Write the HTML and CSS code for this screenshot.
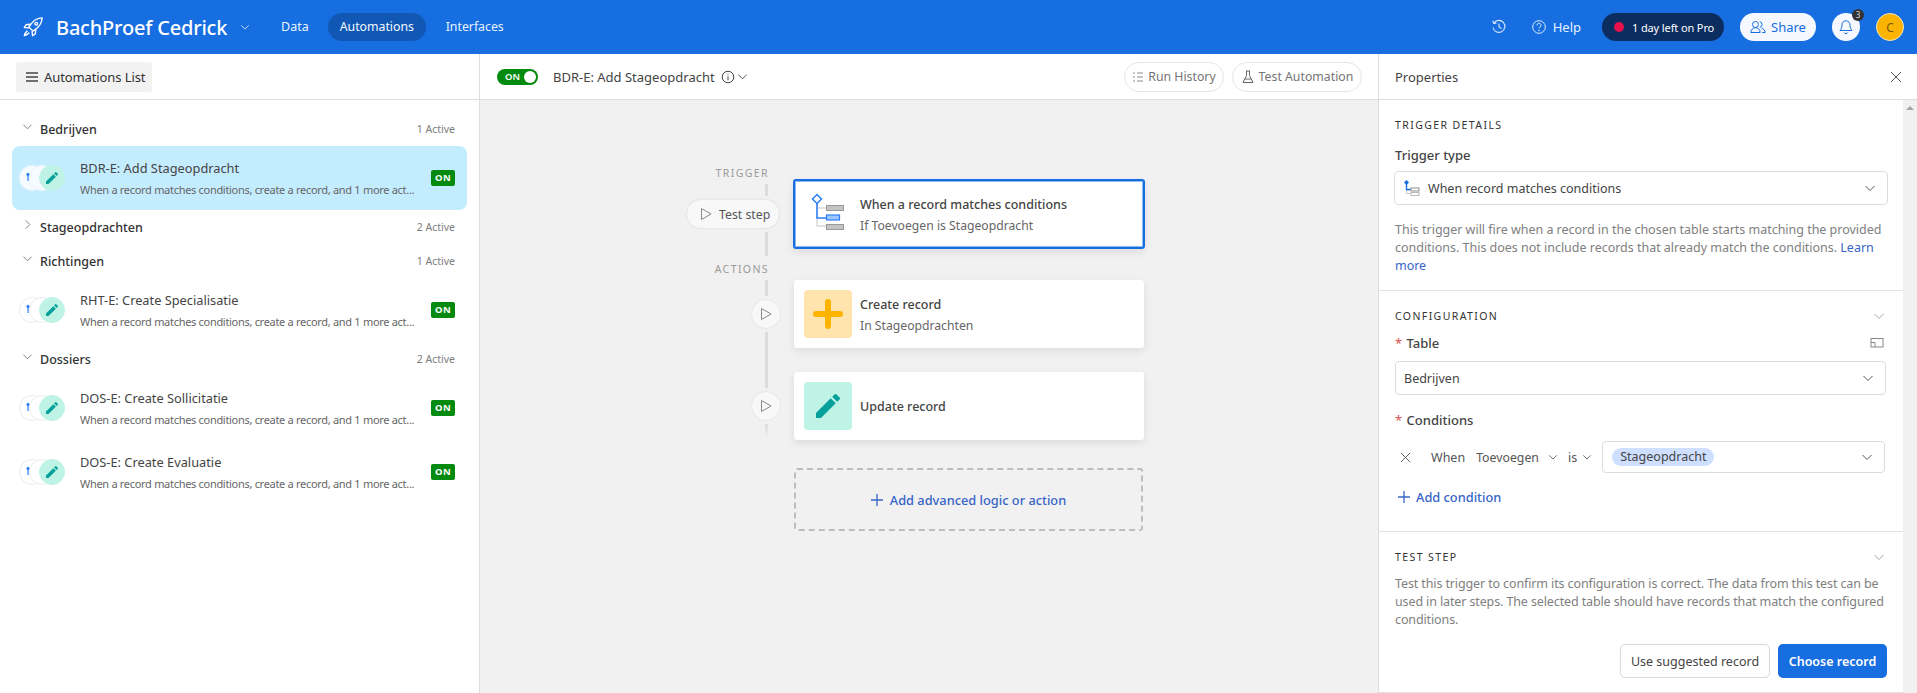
FILE: index.html
```html
<!DOCTYPE html>
<html lang="en">
<head>
<meta charset="utf-8">
<title>BachProef Cedrick - Automations</title>
<link rel="stylesheet" href="styles.css">
</head>
<body>
<svg class="defs" aria-hidden="true">
  <symbol id="chev" viewBox="0 0 12 12"><path d="M1.5 4l4.5 4.5L10.5 4" fill="none" stroke="currentColor" stroke-width="1"/></symbol>
  <symbol id="chevr" viewBox="0 0 12 12"><path d="M4 1.5L8.5 6 4 10.5" fill="none" stroke="currentColor" stroke-width="1"/></symbol>
  <symbol id="play" viewBox="0 0 14 14"><path d="M2.5 1.5L12 7l-9.5 5.500z" fill="none" stroke="currentColor" stroke-width="1"/></symbol>
  <symbol id="x" viewBox="0 0 12 12"><path d="M1 1l10 10M11 1L1 11" fill="none" stroke="currentColor" stroke-width="1"/></symbol>
  <symbol id="plus" viewBox="0 0 12 12"><path d="M6 0v12M0 6h12" fill="none" stroke="currentColor" stroke-width="1.300"/></symbol>
  <symbol id="pencil" viewBox="0 0 24 24"><path fill="currentColor" d="M3 17.250V21h3.750L17.810 9.940l-3.750-3.750L3 17.250zM20.710 7.040c.39-.39.39-1.020 0-1.410l-2.340-2.340c-.39-.39-1.020-.39-1.410 0l-1.830 1.830 3.750 3.750 1.830-1.830z"/></symbol>
  <symbol id="pin" viewBox="0 0 8 16"><path d="M4 5v6" stroke="#2d7ff9" stroke-width="1.200"/><path d="M4 2.500L6 4.500 4 6.500 2 4.500z" fill="#2d7ff9"/></symbol>
</svg>

<header class="topbar">
  <svg class="logo" viewBox="0 0 24 24" fill="none" stroke="#fff" stroke-width="1.500" stroke-linejoin="round" stroke-linecap="round">
    <path d="M22 2c-5 .3-9 2.500-12 6.500L7.500 12l4.500 4.500 3.500-2.500C19.500 11 21.700 7 22 2z"/>
    <path d="M8.500 9L4.500 9.500 2.500 12.500 7 13"/>
    <path d="M15 15.500l-.5 4-3 2-.5-4.500"/>
    <path d="M5.500 16.500C3.800 18 3 20 2.500 21.500 4 21 6 20.200 7.500 18.500"/>
    <circle cx="15.500" cy="8.500" r="1.500"/>
  </svg>
  <span class="base-name">BachProef Cedrick</span>
  <svg class="ic chev-base"><use href="#chev"/></svg>
  <nav class="nav">
    <a class="nav-item">Data</a>
    <a class="nav-item nav-active">Automations</a>
    <a class="nav-item">Interfaces</a>
  </nav>
  <div class="top-right">
    <svg class="ic-16" viewBox="0 0 16 16" fill="none" stroke="#dbe9fb" stroke-width="1.100"><path d="M2.800 4.200A6 6 0 1 1 2 8.500"/><path d="M1.800 1.800l1 2.600 2.600-.3"/><path d="M8 4.500V8l2.500 1.500"/></svg>
    <div class="help">
      <svg class="ic-16" viewBox="0 0 16 16" fill="none" stroke="#dbe9fb" stroke-width="1"><circle cx="8" cy="8" r="6.300"/><path d="M6 6.300a2 2 0 1 1 3 1.700c-.7.4-1 .8-1 1.500"/><circle cx="8" cy="11.500" r=".4"/></svg>
      <span>Help</span>
    </div>
    <div class="pro"><i class="dot"></i><span>1 day left on Pro</span></div>
    <div class="share">
      <svg class="ic-16" viewBox="0 0 16 16" fill="none" stroke="#166ee1" stroke-width="1"><circle cx="5.500" cy="5.500" r="3"/><path d="M.8 13.500c.3-3 2-4.800 4.700-4.800s4.400 1.800 4.700 4.800z"/><path d="M9.800 2.600a3 3 0 0 1 0 5.800M11.500 9c2 .5 3.300 2.200 3.700 4.500h-3"/></svg>
      <span>Share</span>
    </div>
    <div class="bell">
      <svg class="ic-16" viewBox="0 0 16 16" fill="none" stroke="#166ee1" stroke-width="1"><path d="M8 1.800c-2.600 0-4 2-4 4.400 0 3-1.500 4.500-2 5.300h12c-.5-.8-2-2.300-2-5.300 0-2.400-1.400-4.400-4-4.400z"/><path d="M6.300 13.500a1.800 1.800 0 0 0 3.400 0"/></svg>
      <b class="badge">3</b>
    </div>
    <div class="avatar">C</div>
  </div>
</header>

<main class="main">
  <aside class="side">
    <div class="bar side-bar">
      <button class="list-btn">
        <svg class="ic-12" viewBox="0 0 12 12" stroke="#444" stroke-width="1.300"><path d="M0 2h12M0 6h12M0 10h12"/></svg>
        <span>Automations List</span>
      </button>
    </div>
    <div class="groups">
      <div class="group-h"><svg class="ic g-chev"><use href="#chev"/></svg><span class="g-name">Bedrijven</span><span class="g-count">1 Active</span></div>
      <div class="row row-sel">
        <div class="stack"><i class="c c1"><svg><use href="#pin"/></svg></i><i class="c c2"></i><i class="c c3"><svg><use href="#pencil"/></svg></i></div>
        <div class="row-t"><div class="row-title">BDR-E: Add Stageopdracht</div><div class="row-sub">When a record matches conditions, create a record, and 1 more act...</div></div>
        <span class="on">ON</span>
      </div>
      <div class="group-h"><svg class="ic g-chev g-chev-r"><use href="#chevr"/></svg><span class="g-name">Stageopdrachten</span><span class="g-count">2 Active</span></div>
      <div class="group-h"><svg class="ic g-chev"><use href="#chev"/></svg><span class="g-name">Richtingen</span><span class="g-count">1 Active</span></div>
      <div class="row">
        <div class="stack"><i class="c c1"><svg><use href="#pin"/></svg></i><i class="c c2"></i><i class="c c3"><svg><use href="#pencil"/></svg></i></div>
        <div class="row-t"><div class="row-title">RHT-E: Create Specialisatie</div><div class="row-sub">When a record matches conditions, create a record, and 1 more act...</div></div>
        <span class="on">ON</span>
      </div>
      <div class="group-h"><svg class="ic g-chev"><use href="#chev"/></svg><span class="g-name">Dossiers</span><span class="g-count">2 Active</span></div>
      <div class="row">
        <div class="stack"><i class="c c1"><svg><use href="#pin"/></svg></i><i class="c c2"></i><i class="c c3"><svg><use href="#pencil"/></svg></i></div>
        <div class="row-t"><div class="row-title">DOS-E: Create Sollicitatie</div><div class="row-sub">When a record matches conditions, create a record, and 1 more act...</div></div>
        <span class="on">ON</span>
      </div>
      <div class="row">
        <div class="stack"><i class="c c1"><svg><use href="#pin"/></svg></i><i class="c c2"></i><i class="c c3"><svg><use href="#pencil"/></svg></i></div>
        <div class="row-t"><div class="row-title">DOS-E: Create Evaluatie</div><div class="row-sub">When a record matches conditions, create a record, and 1 more act...</div></div>
        <span class="on">ON</span>
      </div>
    </div>
  </aside>

  <section class="center">
    <div class="bar center-bar">
      <div class="toggle"><span>ON</span><i></i></div>
      <span class="auto-name">BDR-E: Add Stageopdracht</span>
      <svg class="ic-14 info" viewBox="0 0 14 14" fill="none" stroke="#444" stroke-width="1"><circle cx="7" cy="7" r="5.800"/><path d="M7 6.200v4"/><path d="M7 3.800v1"/></svg>
      <svg class="ic chev-name"><use href="#chev"/></svg>
      <div class="bar-actions">
        <div class="ghost">
          <svg class="ic-12" viewBox="0 0 12 12" stroke="#8a8a8a" stroke-width="1" fill="none"><path d="M1 2h2M5 2h6M1 6h2M5 6h6M1 10h2M5 10h6"/></svg>
          <span>Run History</span>
        </div>
        <div class="ghost">
          <svg class="ic-14" viewBox="0 0 14 14" stroke="#666" stroke-width="1" fill="none"><path d="M5 1h4M5.500 1v4.500L2 12.500h10L8.500 5.500V1"/><path d="M3.800 9h6.400"/></svg>
          <span>Test Automation</span>
        </div>
      </div>
    </div>
    <div class="canvas">
      <div class="flow">
        <div class="rail">
          <div class="rail-label">TRIGGER</div>
          <i class="line l12"></i>
          <div class="test-pill"><svg class="ic-14"><use href="#play"/></svg><span>Test step</span></div>
          <i class="line l24"></i>
          <div class="rail-label rail-actions">ACTIONS</div>
          <i class="line l16"></i>
          <div class="play-c"><svg class="ic-14"><use href="#play"/></svg></div>
          <i class="line l56"></i>
          <div class="play-c"><svg class="ic-14"><use href="#play"/></svg></div>
          <i class="line l-fade"></i>
        </div>
        <div class="cards">
          <div class="card card-trigger">
            <svg class="tile-svg" viewBox="0 0 48 48" fill="none">
              <path d="M13 14v22h9M13 18h9" stroke="#d9d9d9" stroke-width="1.500"/>
              <path d="M13 13v15h9" stroke="#2d7ff9" stroke-width="1.500"/>
              <path d="M13 4.500L17.500 9 13 13.500 8.500 9z" fill="#fff" stroke="#2d7ff9" stroke-width="1.500"/>
              <rect x="22.500" y="15.500" width="17" height="5" fill="#c4c4c4" stroke="#999" stroke-width="1"/>
              <rect x="22.500" y="25" width="13" height="5" fill="#9cc7ff" stroke="#2d7ff9" stroke-width="1.200"/>
              <rect x="22.500" y="34.500" width="17" height="5" fill="#c4c4c4" stroke="#999" stroke-width="1"/>
            </svg>
            <div class="card-text"><div class="card-title">When a record matches conditions</div><div class="card-sub">If Toevoegen is Stageopdracht</div></div>
          </div>
          <div class="card">
            <div class="tile tile-y"><svg viewBox="0 0 30 30"><path d="M15 3v24M3 15h24" stroke="#fcb400" stroke-width="6" stroke-linecap="round"/></svg></div>
            <div class="card-text"><div class="card-title">Create record</div><div class="card-sub">In Stageopdrachten</div></div>
          </div>
          <div class="card">
            <div class="tile tile-g"><svg><use href="#pencil"/></svg></div>
            <div class="card-title">Update record</div>
          </div>
          <div class="add-box"><svg class="ic-12"><use href="#plus"/></svg><span>Add advanced logic or action</span></div>
        </div>
      </div>
    </div>
  </section>

  <aside class="props">
    <div class="bar props-bar"><span class="props-title">Properties</span><svg class="ic-12 close"><use href="#x"/></svg></div>
    <div class="props-body">
      <div class="props-scroll">
        <section class="sec sec-1">
          <h3 class="sec-h">TRIGGER DETAILS</h3>
          <div class="lab lab-type">Trigger type</div>
          <div class="select">
            <svg class="sel-ic" viewBox="0 0 16 16" fill="none"><path d="M2.500 4v6h4M2.500 10v3.500h4" stroke="#c8c8c8"/><path d="M2.500 4v5.500h4" stroke="#166ee1" stroke-width="1.400"/><path d="M2.500 0L5 2.500 2.500 5 0 2.500z" fill="#166ee1"/><rect x="7" y="8" width="8" height="3" stroke="#777" stroke-width=".8"/><rect x="7" y="12.500" width="8" height="3" stroke="#aaa" stroke-width=".8"/></svg>
            <span class="sel-text">When record matches conditions</span>
            <svg class="ic sel-chev"><use href="#chev"/></svg>
          </div>
          <p class="help-p help-1">This trigger will fire when a record in the chosen table starts matching the provided conditions. This does not include records that already match the conditions. <a class="lnk">Learn more</a></p>
        </section>
        <section class="sec sec-2">
          <div class="sec-row"><h3 class="sec-h">CONFIGURATION</h3><svg class="ic sec-chev"><use href="#chev"/></svg></div>
          <div class="lab-row"><div class="lab"><em>*</em> Table</div>
            <svg class="ic-14" viewBox="0 0 14 14" fill="none" stroke="#888" stroke-width="1"><rect x="1" y="2.500" width="12" height="8.500"/><path d="M1 6.500h4V11"/></svg></div>
          <div class="select select-t"><span class="sel-text">Bedrijven</span><svg class="ic sel-chev"><use href="#chev"/></svg></div>
          <div class="lab lab-cond"><em>*</em> Conditions</div>
          <div class="cond">
            <svg class="ic-12 cond-x"><use href="#x"/></svg>
            <span class="cond-w">When</span>
            <span class="cond-f">Toevoegen</span><svg class="ic cond-c cond-c1"><use href="#chev"/></svg>
            <span class="cond-is">is</span><svg class="ic cond-c"><use href="#chev"/></svg>
            <div class="cond-box"><span class="chip">Stageopdracht</span><svg class="ic sel-chev"><use href="#chev"/></svg></div>
          </div>
          <div class="add-cond"><svg class="ic-12"><use href="#plus"/></svg><span>Add condition</span></div>
        </section>
        <section class="sec sec-3">
          <div class="sec-row"><h3 class="sec-h">TEST STEP</h3><svg class="ic sec-chev"><use href="#chev"/></svg></div>
          <p class="help-p help-2">Test this trigger to confirm its configuration is correct. The data from this test can be used in later steps. The selected table should have records that match the configured conditions.</p>
          <div class="btns"><button class="btn btn-o">Use suggested record</button><button class="btn btn-p">Choose record</button></div>
        </section>
      </div>
      <div class="scrollbar"><i class="arrow"></i></div>
    </div>
  </aside>
</main>
</body>
</html>
```

FILE: styles.css
```css
* { box-sizing: border-box; }
html, body { margin: 0; height: 100%; overflow: hidden; }
body { font-family: "Noto Sans", "Open Sans", sans-serif; font-size: 13px; color: #333; background: #fff; display: flex; flex-direction: column; }
svg { display: block; flex: none; }
i { display: block; }
.defs { display: none; }
.ic { width: 12px; height: 12px; }
.ic-12 { width: 12px; height: 12px; }
.ic-14 { width: 14px; height: 14px; }
.ic-16 { width: 16px; height: 16px; }

/* top bar */
.topbar { height: 54px; flex: none; background: #166ee1; display: flex; align-items: center; padding-left: 22px; color: #fff; }
.logo { width: 22px; height: 22px; }
.base-name { margin-left: 12px; font-size: 20px; font-weight: 500; letter-spacing: -.2px; width: 174px; white-space: nowrap; }
.chev-base { margin-left: 10px; color: #e3eefc; width: 10px; height: 10px; }
.nav { display: flex; align-items: center; margin-left: 31px; }
.nav-item { height: 28px; line-height: 27px; border-radius: 14px; padding: 0 12px; color: #e8f1fd; font-size: 12.300px; }
.nav-item + .nav-item { margin-left: 8px; }
.nav-item:first-child { padding: 0 0; margin-right: 11px; font-size: 12.500px; }
.nav-active { background: #1158b5; color: #f2f7fe; width: 98px; text-align: center; }
.top-right { margin-left: auto; display: flex; align-items: center; padding-right: 13px; }
.help { display: flex; align-items: center; gap: 6px; margin-left: 24px; color: #e8f1fd; font-size: 13px; }
.pro { margin-left: 21px; width: 122px; height: 28px; border-radius: 14px; background: #0c2d60; color: #fff; display: flex; align-items: center; padding-left: 12px; font-size: 11px; letter-spacing: -.12px; white-space: nowrap; }
.dot { width: 10px; height: 10px; border-radius: 50%; background: #e8114b; margin-right: 8px; }
.share { margin-left: 16px; width: 76px; height: 28px; border-radius: 14px; background: #f5f9ff; color: #166ee1; display: flex; align-items: center; justify-content: center; gap: 5px; font-size: 13px; }
.bell { margin-left: 16px; width: 28px; height: 28px; border-radius: 50%; background: #f5f9ff; display: flex; align-items: center; justify-content: center; position: relative; }
.badge { position: absolute; top: -4px; right: -4px; width: 12px; height: 12px; border-radius: 50%; background: #333; color: #ddd; font-size: 8px; font-weight: 400; line-height: 12px; text-align: center; }
.avatar { margin-left: 16px; width: 28px; height: 28px; border-radius: 50%; background: #fcb400; border: 1px solid #f7e6b8; color: #7a5a10; font-size: 12px; display: flex; align-items: center; justify-content: center; }

/* layout */
.main { flex: 1; min-height: 0; display: flex; }
.bar { height: 46px; flex: none; border-bottom: 1px solid #dedede; display: flex; align-items: center; background: #fff; }
.side { width: 480px; flex: none; border-right: 1px solid #dedede; display: flex; flex-direction: column; }
.center { width: 899px; flex: none; border-right: 1px solid #dedede; display: flex; flex-direction: column; }
.props { flex: 1; min-width: 0; display: flex; flex-direction: column; }

/* sidebar */
.side-bar { padding-left: 16px; }
.list-btn { width: 136px; height: 30px; border: 0; border-radius: 3px; background: #f2f2f2; color: #333; font: inherit; font-size: 13px; letter-spacing: -.1px; display: flex; align-items: center; gap: 6px; padding: 0 0 0 10px; white-space: nowrap; }
.groups { padding: 12px 0 0 12px; }
.group-h { width: 443px; height: 34px; display: flex; align-items: center; }
.g-chev { width: 11px; height: 11px; margin-left: 10px; color: #777; position: relative; top: -3px; }
.g-name { margin-left: 7px; font-size: 12.500px; font-weight: 500; color: #333; }
.g-count { margin-left: auto; font-size: 10.500px; color: #7d7d7d; }
.row { width: 455px; height: 64px; border-radius: 8px; display: flex; align-items: center; padding: 0 12px 0 7px; }
.row-sel { background: #c4ecff; }
.stack { width: 46px; height: 26px; flex: none; display: flex; position: relative; top: 0; }
.c { width: 26px; height: 26px; border-radius: 50%; background: rgba(255,255,255,.85); border: 1px solid #ececec; flex: none; display: flex; align-items: center; justify-content: center; }
.row-sel .c { background: #f5fbfe; border-color: #e9f5fb; }
.c2, .c3 { margin-left: -16px; }
.c1 { padding-right: 8px; }
.c1 svg { width: 8px; height: 16px; }
.c3, .row-sel .c3 { background: #bff3e5; border-color: #bff3e5; color: #06a09b; }
.c3 svg { width: 16px; height: 16px; }
.row-t { margin-left: 15px; width: 340px; min-width: 0; }
.row-title { font-size: 12.800px; line-height: 18px; color: #444; }
.row-sub { font-size: 11px; letter-spacing: -.3px; line-height: 16px; color: #666; margin-top: 5px; white-space: nowrap; overflow: hidden; }
.on { margin-left: auto; flex: none; width: 24px; height: 16px; border-radius: 2px; background: #048a0e; color: #fff; font-size: 9.500px; font-weight: 700; letter-spacing: .5px; line-height: 16px; text-align: center; }

/* center */
.center-bar { padding: 0 16px 0 17px; }
.toggle { width: 41px; height: 16px; border-radius: 8px; background: #048a0e; color: #fff; display: flex; align-items: center; padding: 0 2px 0 8px; justify-content: space-between; font-size: 9.500px; font-weight: 600; }
.toggle i { width: 12px; height: 12px; border-radius: 50%; background: #fff; }
.auto-name { margin-left: 15px; font-size: 13px; color: #444; }
.info { margin-left: 6px; }
.chev-name { margin-left: 2px; width: 11px; height: 11px; color: #444; }
.bar-actions { margin-left: auto; display: flex; gap: 8px; }
.ghost { height: 30px; border: 1px solid #e6e6e6; border-radius: 15px; display: flex; align-items: center; justify-content: center; gap: 4px; font-size: 12.300px; color: #757575; white-space: nowrap; }
.ghost:first-child { width: 100px; }
.ghost:last-child { width: 130px; }
.canvas { flex: 1; background: #f1f1f1; display: flex; padding: 65px 0 0 206px; }
.flow { display: flex; gap: 13px; }
.rail { width: 95px; display: flex; flex-direction: column; align-items: flex-end; }
.rail-label { height: 16px; line-height: 16px; margin-right: 12px; font-size: 10.500px; letter-spacing: 1.400px; color: #9a9a9a; }
.rail-actions { margin-top: 5px; }
.line { width: 3px; margin: 3px 13px 0 0; background: #dcdcdc; }
.l12 { height: 12px; }
.l24 { height: 24px; }
.l16 { height: 16px; }
.l56 { height: 56px; }
.l-fade { height: 14px; background: linear-gradient(#dcdcdc, #f1f1f1); }
.test-pill { margin: 3px 1px 0 0; width: 94px; height: 30px; border: 1px solid #e8e8e8; border-radius: 15px; background: #f8f8f8; display: flex; align-items: center; gap: 6px; padding-left: 12px; font-size: 12.300px; color: #555; white-space: nowrap; box-shadow: 0 0 2px rgba(0,0,0,.06); }
.test-pill svg, .play-c svg { color: #888; }
.play-c { margin-top: 3px; width: 30px; height: 30px; border: 1px solid #e8e8e8; border-radius: 50%; background: #f8f8f8; display: flex; align-items: center; justify-content: center; }
.cards { width: 350px; padding-top: 14px; display: flex; flex-direction: column; }
.card { height: 68px; background: #fff; border-radius: 3px; display: flex; align-items: center; padding-left: 10px; gap: 8px; box-shadow: 0 3px 8px rgba(0,0,0,.09); margin-bottom: 24px; }
.card-trigger { height: 70px; margin: 0 -1px 31px; border: 2px solid #166ee1; padding-left: 9px; box-shadow: inset 0 0 0 1px #8ab8f2, 0 3px 8px rgba(0,0,0,.09); }
.tile-svg { width: 48px; height: 48px; }
.tile { width: 48px; height: 48px; border-radius: 4px; display: flex; align-items: center; justify-content: center; }
.tile-y { background: #ffe4ad; }
.tile-y svg { width: 30px; height: 30px; }
.tile-g { background: #bff3e5; color: #06a09b; }
.tile-g svg { width: 32px; height: 32px; }
.card-text { padding-top: 2px; }
.card-title { font-size: 12.500px; font-weight: 500; line-height: 20px; color: #444; margin-top: 1px; }
.card-sub { font-size: 12.200px; line-height: 20px; color: #666; margin-top: 1px; }
.add-box { margin-top: 4px; height: 63px; width: 349px; border: 2px dashed #bdbdbd; border-radius: 3px; display: flex; align-items: center; justify-content: center; gap: 7px; color: #3864c8; font-size: 12.800px; font-weight: 500; }

/* properties */
.props-bar { padding: 0 15px 0 16px; justify-content: space-between; }
.props-title { font-size: 13px; color: #444; }
.close { color: #555; }
.props-body { flex: 1; min-height: 0; display: flex; }
.props-scroll { flex: 1; min-width: 0; }
.scrollbar { width: 14px; flex: none; background: #f1f1f1; padding: 6px 0 0 3px; }
.arrow { width: 0; height: 0; border: 4px solid transparent; border-top: 0; border-bottom: 4px solid #a3a3a3; }
.sec { border-bottom: 1px solid #e3e3e3; padding: 0 16px; }
.sec-1 { height: 191px; padding-top: 17px; }
.sec-2 { height: 241px; padding-top: 17px; }
.sec-3 { height: 161px; padding-top: 17px; }
.sec-h { margin: 0; font-size: 10.500px; font-weight: 400; letter-spacing: 1.400px; color: #333; line-height: 16px; }
.sec-row { display: flex; justify-content: space-between; align-items: center; }
.sec-chev { color: #a5a5a5; margin-right: 2px; }
.lab { font-size: 13px; font-weight: 500; color: #444; line-height: 18px; }
.lab em { font-style: normal; color: #d9534f; font-weight: 400; margin-right: 1px; }
.lab-type { margin-top: 13px; }
.select { margin-top: 7px; width: 494px; height: 34px; margin-left: -1px; border: 1px solid #dcdcdc; border-radius: 4px; display: flex; align-items: center; padding: 0 11px 0 9px; }
.sel-ic { width: 16px; height: 16px; margin-right: 8px; }
.sel-text { font-size: 12.500px; color: #444; }
.sel-chev { margin-left: auto; color: #555; }
.help-p { margin: 16px 0 0; font-size: 12.500px; line-height: 18px; color: #808080; }
.help-1 { letter-spacing: -.02px; }
.lnk { color: #3864c8; }
.lab-row { display: flex; justify-content: space-between; align-items: center; margin-top: 10px; padding-right: 3px; }
.select-t { margin: 9px 0 0; width: 491px; padding-left: 8px; }
.lab-cond { margin-top: 16px; }
.cond { margin-top: 12px; height: 32px; display: flex; align-items: center; }
.cond-x { margin-left: 5px; width: 11px; height: 11px; color: #555; }
.cond-w { margin-left: 20px; font-size: 12.500px; color: #555; }
.cond-f { margin-left: 11px; font-size: 12.300px; color: #555; }
.cond-is { margin-left: 10px; font-size: 12.500px; color: #555; }
.cond-c { width: 10px; height: 10px; margin-left: 5px; color: #555; }
.cond-c1 { margin-left: 9px; }
.cond-box { margin-left: 10px; flex: 1; height: 32px; margin-right: 2px; border: 1px solid #dcdcdc; border-radius: 4px; display: flex; align-items: center; padding: 0 11px 0 9px; }
.chip { height: 18px; line-height: 18px; border-radius: 9px; background: #cfdfff; padding: 0 8px; font-size: 12.500px; color: #444; }
.add-cond { margin: 15px 0 0 3px; display: flex; align-items: center; gap: 6px; color: #3864c8; font-size: 12.800px; font-weight: 500; }
.help-2 { margin-top: 10px; letter-spacing: -.12px; }
.btns { margin-top: 15px; display: flex; justify-content: flex-end; gap: 8px; padding-right: 0; }
.btn { height: 34px; border-radius: 5px; font: inherit; font-size: 12.500px; padding: 0; }
.btn-o { width: 150px; background: #fff; border: 1px solid #d9d9d9; color: #444; }
.btn-p { width: 109px; background: #166ee1; border: 0; color: #fff; font-weight: 600; }
```
